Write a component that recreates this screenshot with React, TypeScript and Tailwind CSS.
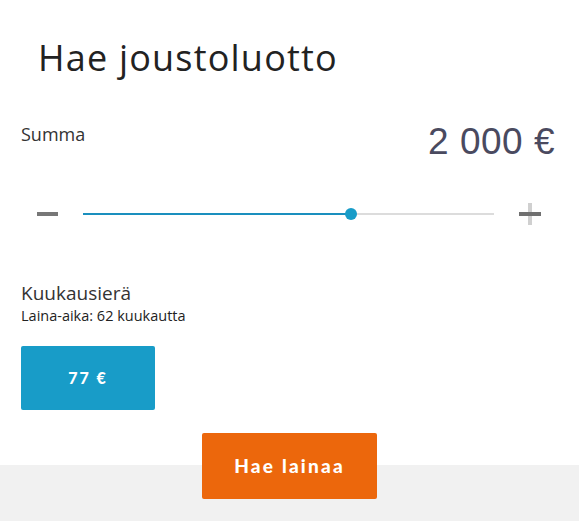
export default function App() {
  // slider position of the current amount, as a percentage of the track
  const pct = 65.3;

  return (
    <div className="w-[579px] h-[521px] bg-white flex flex-col overflow-hidden font-['Open_Sans',sans-serif]">
      <div className="flex-1 flex flex-col">
        <h1 className="pl-[38px] pt-[34px] text-[36px] leading-[48px] font-normal text-[#222] tracking-[1.2px]">
          Hae joustoluotto
        </h1>

        <div className="flex justify-between items-start pl-[21px] pr-[24px] mt-[40px]">
          <span className="text-[18px] leading-[24px] text-[#333]">Summa</span>
          <span className="font-['Liberation_Sans',Arial,sans-serif] text-[37px] leading-[40px] text-[#4a4a5f] tracking-[0.5px]">
            2 000 €
          </span>
        </div>

        <div className="flex items-center pl-[37px] pr-[38px] mt-[40px] h-[24px]">
          <button className="w-[21px] h-[24px] flex items-center" aria-label="Vähennä">
            <span className="block w-[21px] h-[4px] bg-[#777]" />
          </button>
          <div className="flex-1 mx-[25px] relative h-[14px] flex items-center">
            <div className="w-full h-[2px] bg-[#dcdcdc] flex">
              <div className="h-full bg-[#1a8fbe]" style={{ width: `${pct}%` }} />
            </div>
            <span
              className="absolute w-[12px] h-[12px] rounded-full bg-[#189cc8] -translate-x-1/2"
              style={{ left: `${pct}%` }}
            />
          </div>
          <button className="w-[22px] h-[24px] flex items-center justify-center relative" aria-label="Lisää">
            <span className="block w-[4px] h-[22px] bg-[#d0d0d0]" />
            <span className="absolute left-0 top-[10px] w-[22px] h-[4px] bg-[#707070]" />
          </button>
        </div>

        <div className="pl-[21px] mt-[55px]">
          <div className="text-[19px] leading-[24px] text-[#333]">Kuukausierä</div>
          <div className="text-[14.5px] leading-[20px] text-[#222] mt-[1px]">Laina-aika: 62 kuukautta</div>
          <div className="mt-[20px] w-[134px] h-[64px] rounded-[2px] bg-[#189cc8] flex items-center justify-center">
            <span className="text-white text-[16px] font-black tracking-[2px] font-['Lato',sans-serif]">77 €</span>
          </div>
        </div>
      </div>

      <div className="h-[56px] bg-[#f1f1f1] flex justify-center">
        <button className="-mt-[32px] w-[175px] h-[66px] rounded-[2px] bg-[#ec670c] text-white text-[19px] font-black tracking-[2.2px] font-['Lato',sans-serif]">
          Hae lainaa
        </button>
      </div>
    </div>
  );
}
